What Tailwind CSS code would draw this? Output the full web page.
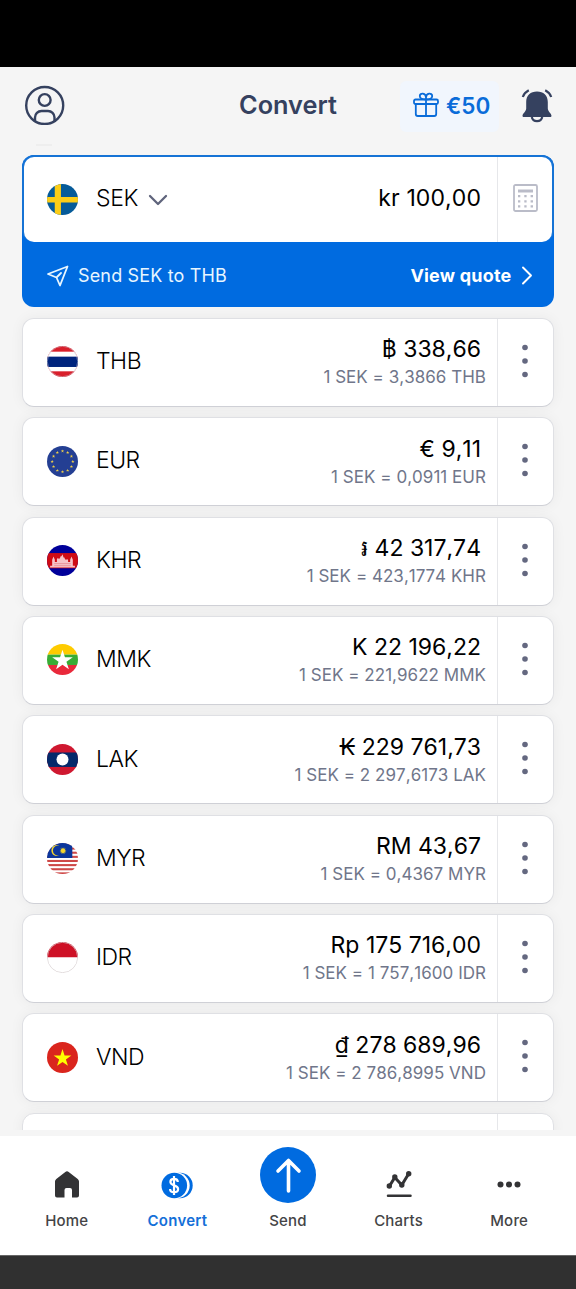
<!DOCTYPE html>
<html lang="en">
<head>
<meta charset="utf-8">
<title>Convert</title>
<script src="https://cdn.jsdelivr.net/npm/@tailwindcss/browser@4"></script>
</head>
<body class="bg-[#f5f5f5] font-['Inter','Noto_Sans',sans-serif] text-black">
<div class="flex h-[1289px] w-[576px] flex-col overflow-hidden">
  <div class="h-[67px] shrink-0 bg-black"></div>

  <header class="relative flex h-[88px] shrink-0 items-start pl-[25px] pr-[22px] pt-[14px]">
    <svg class="mt-[4px] size-10 shrink-0" viewBox="0 0 40 40" fill="none" stroke="#35415f" stroke-width="2.400">
      <circle cx="19.700" cy="20.500" r="18.500"/><circle cx="19.700" cy="15" r="5.900"/>
      <path d="M10 36v-3.500a6.500 6.500 0 0 1 6.500-6.500h6.500a6.500 6.500 0 0 1 6.500 6.500v3.500"/>
    </svg>
    <h1 class="ml-[174px] mt-[7px] w-[110px] whitespace-nowrap text-[25.300px] font-semibold leading-[34px] text-[#35415f]">Convert</h1>
    <div class="ml-[51px] flex h-[51px] w-[99px] shrink-0 items-center rounded-md bg-[#f1f6fd] pl-[13px] text-[#0a6cd9]">
      <svg class="mb-[3px] h-[26px] w-[26px] shrink-0" viewBox="0 0 26 26" fill="none" stroke="currentColor" stroke-width="1.800">
        <rect x="1" y="7.500" width="24" height="4.500" rx="1.500"/>
        <path d="M2.800 12v10a2 2 0 0 0 2 2h16.400a2 2 0 0 0 2-2v-10M13 7.500v16.500M13 7.500C9 7.500 6.800 6 6.800 3.900c0-3.200 6.200-3.200 6.200 1.700v1.900c0 0 6.200 0 6.200-3.600 0-3.200-6.200-3.200-6.200 1.700"/>
      </svg>
      <span class="mb-[1px] ml-[7px] text-[22.500px] font-semibold leading-none">€50</span>
    </div>
    <svg class="ml-[22px] mt-[8px] h-[34px] w-[32px] shrink-0" viewBox="0 0 32 34" fill="none">
      <path fill="#35415f" d="M16 2.500c6.500 0 10.800 4 10.800 10.500v6.500c0 3 3.700 5 3.700 7.200 0 .8-.5 1.300-1.300 1.300H2.800c-.8 0-1.300-.5-1.300-1.300 0-2.200 3.700-4.200 3.700-7.200V13c0-6.500 4.300-10.500 10.800-10.500z"/>
      <path d="M10.800 28c1 5.500 9.400 5.500 10.400 0M1.800 8c1-2.800 3.300-5.300 6-6.700M30.200 8c-1-2.800-3.300-5.300-6-6.700" stroke="#35415f" stroke-width="2.200"/>
    </svg>
    <span class="absolute left-[36px] top-[77px] h-[2px] w-[16px] bg-[#eeeeee]"></span>
  </header>

  <main class="h-[974.500px] shrink-0 overflow-hidden px-[22px]">
    <section class="h-[152px] w-[531.500px] rounded-[12px] bg-[#006be0]">
      <div class="flex h-[87px] items-center rounded-[12px] border-2 border-b-0 border-[#1673d5] bg-[#006be0]">
        <div class="flex h-full w-full items-center rounded-[10px] bg-white">
          <svg class="ml-[23px] size-[31px] shrink-0 rounded-full" viewBox="0 0 30 30"><path fill="#065b99" d="M0 0h30v30H0z"/><path fill="#fccd17" d="M7.500 0h6v30h-6zM0 12.500h30v5.500H0z"/></svg>
          <span class="mb-[2px] ml-[18px] text-[23px] font-light tracking-[-0.4px]">SEK</span>
          <svg class="ml-[10px] h-[12px] w-[20px]" viewBox="0 0 20 12" fill="none" stroke="#5f647c" stroke-width="2.300" stroke-linecap="round" stroke-linejoin="round"><path d="M2 2l8 8 8-8"/></svg>
          <span class="mb-[3px] ml-auto mr-[16px] text-[23px] tracking-[0.1px] [font-kerning:none] [font-feature-settings:'calt'_0]">kr 100,00</span>
          <div class="flex h-full w-[54.500px] items-center justify-center border-l border-[#e6e7ea] pb-[3px]">
            <svg class="ml-px h-[28px] w-[25px]" viewBox="0 0 25 28"><rect x="1" y="1" width="23" height="26" rx="1.500" fill="#fff" stroke="#babcc8" stroke-width="1.800"/><path stroke="#babcc8" stroke-width="3" d="M5 7h15"/><path stroke="#babcc8" stroke-width="2.300" d="M5 12.200h2.300m4 0h2.300m4 0H20M5 17.300h2.300m4 0h2.300m4 0H20M5 22.400h2.300m4 0h2.300m4 0H20"/></svg>
          </div>
        </div>
      </div>
      <div class="flex h-[65px] items-center pl-[25px] pr-[21px] pt-[1px] text-white">
        <svg class="mt-px size-[22px]" viewBox="0 0 22 22" fill="none" stroke="#e8f6ff" stroke-width="1.800" stroke-linejoin="round" stroke-linecap="round"><path d="M1 9L20.500 1.500 13 20.500 9.500 12.500zM9.500 12.500l4.500-4.500"/></svg>
        <span class="ml-[9px] text-[18px] tracking-[0.150px] text-[#e8f6ff]">Send SEK to THB</span>
        <span class="ml-auto text-[18px] font-bold tracking-[0.2px]">View quote</span>
        <svg class="ml-[9px] h-[19px] w-[12px]" viewBox="0 0 12 19" fill="none" stroke="#fff" stroke-width="1.900" stroke-linecap="round" stroke-linejoin="round"><path d="M2 1.500l8 8-8 8"/></svg>
      </div>
    </section>

    <ul id="rates" class="mt-[10.900px] flex flex-col gap-[10.350px]"></ul>
  </main>

  <nav class="mt-[6.500px] flex h-[119px] shrink-0 justify-center bg-white text-[15px] font-medium leading-[20px] text-[#444446]">
    <div class="flex w-[110.600px] flex-col items-center">
      <div class="flex h-[75px] items-end pb-[13px]"><svg class="h-[27px] w-[26px]" viewBox="0 0 26 27" fill="#333335"><path d="M11.300.900a2.700 2.700 0 0 1 3.400 0l9 7A3.500 3.500 0 0 1 25 10.700V24.500a2 2 0 0 1-2 2h-5V19a2 2 0 0 0-2-2h-3.500a2 2 0 0 0-2 2v7.500H3a2 2 0 0 1-2-2V10.700a3.500 3.500 0 0 1 1.300-2.800z"/></svg></div>
      <span class="tracking-[0.2px]">Home</span>
    </div>
    <div class="flex w-[110.600px] flex-col items-center text-[#146fd8]">
      <div class="flex h-[75px] items-end pb-[12px]"><svg class="h-[27px] w-[32px]" viewBox="0 0 32 27"><circle cx="19" cy="13.500" r="12.700" fill="#006be0"/><circle cx="15.800" cy="13.500" r="12.900" fill="#fff"/><circle cx="13.300" cy="13.500" r="12.800" fill="#006be0"/><path d="M16.800 10c0-2-1.700-3.200-3.800-3.200S9.400 8 9.400 9.900c0 4.200 7.700 2.700 7.700 7 0 2-1.800 3.300-4 3.300s-4-1.300-4-3.300M13 4v19" fill="none" stroke="#fff" stroke-width="2.200"/></svg></div>
      <span class="font-semibold tracking-[0.25px]">Convert</span>
    </div>
    <div class="flex w-[110.600px] flex-col items-center">
      <div class="flex h-[75px] items-start pt-[11px]"><svg class="size-[56px]" viewBox="0 0 56 56"><circle cx="28" cy="28" r="28" fill="#006be0"/><path d="M28.500 44V13.500M18 24L28.500 13.500 39 24" fill="none" stroke="#fff" stroke-width="3.600" stroke-linecap="round" stroke-linejoin="round"/></svg></div>
      <span class="tracking-[0.2px]">Send</span>
    </div>
    <div class="flex w-[110.600px] flex-col items-center">
      <div class="flex h-[75px] items-end pb-[13px]"><svg class="h-[28px] w-[26px]" viewBox="0 0 26 28" fill="#333335" stroke="#333335"><path d="M3.500 16L8.800 7.500l7 7.500L22.500 4" fill="none" stroke-width="3"/><g stroke="none"><circle cx="3.300" cy="16" r="2.700"/><circle cx="8.800" cy="7" r="2.700"/><circle cx="15.800" cy="15" r="2.700"/><circle cx="22.700" cy="3.700" r="2.700"/></g><path d="M2 25.800h22.500" stroke-width="2.500" stroke-linecap="round"/></svg></div>
      <span class="tracking-[0.2px]">Charts</span>
    </div>
    <div class="flex w-[110.600px] flex-col items-center">
      <div class="flex h-[75px] items-end pb-[23px]"><svg class="h-[7px] w-[24px]" viewBox="0 0 24 7" fill="#333335"><circle cx="3.500" cy="3.500" r="3"/><circle cx="12" cy="3.500" r="3"/><circle cx="20.500" cy="3.500" r="3"/></svg></div>
      <span class="tracking-[0.2px]">More</span>
    </div>
  </nav>
  <div class="h-[34px] shrink-0 border-t border-[#666] bg-[#303030]"></div>
</div>

<script>
  const star = (cx, cy, r, n = 5, k = 0.382) => Array.from({ length: n * 2 }, (_, i) => {
    const a = -Math.PI / 2 + i * Math.PI / n, q = i % 2 ? r * k : r;
    return (cx + q * Math.cos(a)).toFixed(2) + ',' + (cy + q * Math.sin(a)).toFixed(2);
  }).join(' ');
  const band = (color, y, h) => `<rect width="30" y="${y}" height="${h}" fill="${color}"/>`;
  const flags = {
    THB: band('#d91f2b', 0, 30) + band('#fff', 5.5, 19) + band('#00247d', 10.3, 10) + '<circle cx="15" cy="15" r="14.700" fill="none" stroke="#c8c8d4" stroke-width=".5"/>',
    EUR: band('#243f93', 0, 30) + Array.from({ length: 12 }, (_, i) => `<polygon fill="#f0d048" points="${star(15 + 10 * Math.cos(i * Math.PI / 6), 15 + 10 * Math.sin(i * Math.PI / 6), 1.7)}"/>`).join(''),
    KHR: band('#00009a', 0, 30) + band('#cf0b14', 7.8, 14.7) + '<path fill="#f6c3c8" d="M3 21.800v-1.600h2v-6l1.300-3 1.300 3v2.300h2v-3l1-1 1 1 1-1 .6-1.500h.8L15 9l1 3h.8l.6 1.500 1 1 1-1 1 1v2h2v-2.300l1.300-3 1.300 3v6h2v1.600z"/><path stroke="#cf0b14" stroke-width=".4" opacity=".6" d="M7 18h16M7 20h16"/>',
    MMK: band('#fecb00', 0, 10.3) + band('#38ad35', 10.3, 10) + band('#e9293b', 20.3, 9.7) + `<polygon fill="#fff" points="${star(15, 16, 10.5)}"/>`,
    LAK: band('#cf1830', 0, 30) + band('#04296b', 8.2, 14) + '<circle cx="15" cy="15" r="5.800" fill="#fff"/>',
    MYR: band('#fff', 0, 30) + [0, 4, 8, 12, 16, 20, 24, 28].map(y => band('#ce4847', y + .4, 2)).join('') + `<rect width="24.500" height="14.500" fill="#0b369c"/><path fill="#f6d62b" d="M12 2.600A5.300 5.300 0 1 0 12 12a4.900 4.900 0 1 1 0-9.400z"/><polygon fill="#f6d62b" points="${star(15.500, 7.500, 3.4, 14, .55)}"/>`,
    IDR: band('#ce1126', 0, 15) + band('#fff', 15, 15) + '<circle cx="15" cy="15" r="14.700" fill="none" stroke="#d5cdcf" stroke-width=".7"/>',
    VND: band('#da251d', 0, 30) + `<polygon fill="#ff0" points="${star(15, 15.8, 9)}"/>`
  };
  const rates = [
    ['THB', '฿ 338,66', '3,3866'], ['EUR', '€ 9,11', '0,0911'], ['KHR', '៛ 42 317,74', '423,1774'],
    ['MMK', 'K 22 196,22', '221,9622'], ['LAK', '₭ 229 761,73', '2 297,6173'], ['MYR', 'RM 43,67', '0,4367'],
    ['IDR', 'Rp 175 716,00', '1 757,1600'], ['VND', '₫ 278 689,96', '2 786,8995']
  ];
  document.getElementById('rates').innerHTML = rates.map(([code, amount, rate]) => `
    <li class="flex h-[89px] w-[531.500px] shrink-0 items-center rounded-[12px] border border-[#dfe0e4] border-b-[#cfd0d6] bg-white shadow-[0_0_14px_rgba(0,0,0,0.05)]">
      <svg class="mb-[1px] ml-[24px] size-[31px] shrink-0 rounded-full" viewBox="0 0 30 30">${flags[code]}</svg>
      <span class="ml-[18px] mt-[-2px] text-[23px] font-light tracking-[-0.5px]">${code}</span>
      <div class="ml-auto flex flex-col items-end pr-[11px] [font-kerning:none] [font-feature-settings:'calt'_0]">
        <span class="mr-[5px] text-[23px] leading-[28px]">${amount}</span>
        <span class="mt-[2px] text-[17px] leading-[24px] tracking-[0.03px] text-[#70768a]">1 SEK = ${rate} ${code}</span>
      </div>
      <div class="flex h-full w-[55.500px] items-center justify-center border-l border-[#e6e7ea] pr-[1px]">
        <svg class="mb-[3px] h-[36px] w-[6px]" viewBox="0 0 6 36" fill="#646880"><circle cx="3" cy="4.500" r="2.800"/><circle cx="3" cy="18" r="2.800"/><circle cx="3" cy="31.500" r="2.800"/></svg>
      </div>
    </li>`).join('') + `
    <li class="flex h-[89px] w-[531.500px] shrink-0 justify-end rounded-[12px] border border-[#dfe0e4] bg-white shadow-[0_0_14px_rgba(0,0,0,0.05)]">
      <div class="h-full w-[55.500px] border-l border-[#e6e7ea]"></div>
    </li>`;
</script>
</body>
</html>
